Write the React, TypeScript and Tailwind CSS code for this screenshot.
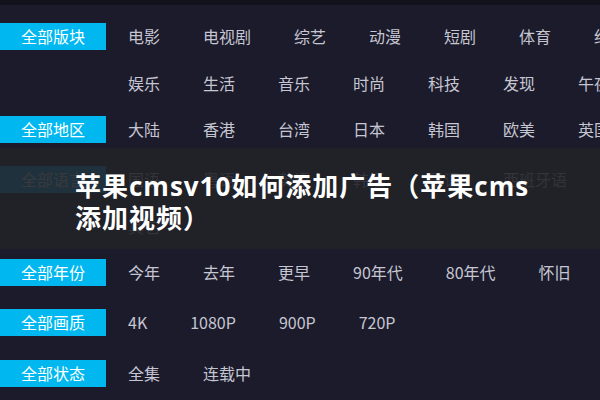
import React from "react";

// 筛选行：标签 + 若干行选项（每行单独给出，超出右侧的部分被裁掉）
const rows: { label: string; lines: string[][]; gap: string }[] = [
  {
    label: "全部版块",
    lines: [
      ["电影", "电视剧", "综艺", "动漫", "短剧", "体育", "纪录片"],
      ["娱乐", "生活", "音乐", "时尚", "科技", "发现", "午夜"],
    ],
    gap: "mb-[19px]",
  },
  {
    label: "全部地区",
    lines: [["大陆", "香港", "台湾", "日本", "韩国", "欧美", "英国"]],
    gap: "mb-[23px]",
  },
  {
    label: "全部语言",
    lines: [["国语", "粤语", "英语", "韩语", "日语", "西班牙语"], ["其它"]],
    gap: "mb-[19px]",
  },
  {
    label: "全部年份",
    lines: [["今年", "去年", "更早", "90年代", "80年代", "怀旧"]],
    gap: "mb-[23px]",
  },
  {
    label: "全部画质",
    lines: [["4K", "1080P", "900P", "720P"]],
    gap: "mb-[24px]",
  },
  {
    label: "全部状态",
    lines: [["全集", "连载中"]],
    gap: "",
  },
];

export default function App() {
  return (
    <div
      className="relative w-[600px] h-[400px] overflow-hidden bg-[#1b1b2b]"
      style={{ fontFamily: '"Noto Sans CJK SC", "Noto Sans", sans-serif' }}
    >
      {/* 顶部深色条 */}
      <div className="h-[5px] bg-[#12121c]" />

      {/* 筛选列表 */}
      <div className="flex flex-col pt-[18px]">
        {rows.map((row) => (
          <div key={row.label} className={`flex items-start ${row.gap}`}>
            <div className="w-[106px] h-[27px] shrink-0 bg-[#00b8ef] text-white text-[16px] leading-[27px] text-center">
              {row.label}
            </div>
            <div className="flex flex-col gap-y-[20px] ml-[22px]">
              {row.lines.map((line, i) => (
                <div key={i} className="flex gap-x-[43px] whitespace-nowrap">
                  {line.map((item) => (
                    <span key={item} className="text-[16px] leading-[27px] text-[#c6c6d2]">
                      {item}
                    </span>
                  ))}
                </div>
              ))}
            </div>
          </div>
        ))}
      </div>

      {/* 标题遮罩 */}
      <div className="absolute left-0 right-0 top-[148px] h-[101px] bg-[#222228]/[0.9] pl-[75px] pt-[22px]">
        <h1
          className="text-white font-bold text-[26px] leading-[32px] tracking-[1px] whitespace-nowrap"
          style={{ fontFamily: '"Open Sans", "Noto Sans CJK SC", sans-serif' }}
        >
          苹果cmsv10如何添加广告（苹果cms
          <br />
          添加视频）
        </h1>
      </div>
    </div>
  );
}
